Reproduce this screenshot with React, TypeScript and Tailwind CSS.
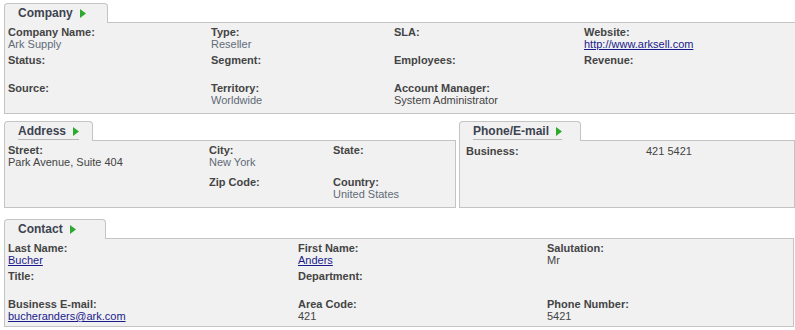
import React from "react";

type Field = {
  label: string;
  value?: string;
  kind?: "soft" | "plain" | "link";
};

function Arrow() {
  return (
    <svg width="6" height="9" viewBox="0 0 6 9" className="ml-[7px] inline-block">
      <path d="M0 0 L6 4.5 L0 9 Z" fill="#2eaa2e" />
    </svg>
  );
}

function Tab({
  title,
  width,
  underline,
}: {
  title: string;
  width: string;
  underline?: boolean;
}) {
  return (
    <div
      className={`relative z-10 -mb-px flex h-[20px] items-center rounded-t-[4px] border border-b-0 border-[#c4c4c4] bg-[#f1f1f1] pl-[13px] ${width}`}
    >
      <span
        className={`flex items-center text-[12px] leading-[15px] font-bold text-[#3d4350] ${
          underline ? "border-b border-[#b8b8b8]" : ""
        }`}
      >
        {title}
        <Arrow />
      </span>
    </div>
  );
}

function Cell({ field }: { field: Field }) {
  const valueClass =
    field.kind === "link"
      ? "text-[#1a1a8c] underline"
      : field.kind === "soft"
        ? "text-[#5f6b78]"
        : "text-[#444]";
  return (
    <div>
      <div className="text-[11px] leading-[12px] font-bold text-[#444]">
        {field.label}
      </div>
      {field.value && (
        <div className={`text-[11px] leading-[12px] ${valueClass}`}>
          {field.value}
        </div>
      )}
    </div>
  );
}

const company: Field[] = [
  { label: "Company Name:", value: "Ark Supply", kind: "soft" },
  { label: "Type:", value: "Reseller", kind: "soft" },
  { label: "SLA:" },
  { label: "Website:", value: "http://www.arksell.com", kind: "link" },
  { label: "Status:" },
  { label: "Segment:" },
  { label: "Employees:" },
  { label: "Revenue:" },
  { label: "Source:" },
  { label: "Territory:", value: "Worldwide", kind: "soft" },
  { label: "Account Manager:", value: "System Administrator", kind: "plain" },
  { label: "" },
];

const address: Field[] = [
  { label: "Street:", value: "Park Avenue, Suite 404", kind: "plain" },
  { label: "City:", value: "New York", kind: "soft" },
  { label: "State:" },
  { label: "" },
  { label: "Zip Code:" },
  { label: "Country:", value: "United States", kind: "soft" },
];

const contact: Field[] = [
  { label: "Last Name:", value: "Bucher", kind: "link" },
  { label: "First Name:", value: "Anders", kind: "link" },
  { label: "Salutation:", value: "Mr", kind: "plain" },
  { label: "Title:" },
  { label: "Department:" },
  { label: "" },
  { label: "Business E-mail:", value: "bucheranders@ark.com", kind: "link" },
  { label: "Area Code:", value: "421", kind: "plain" },
  { label: "Phone Number:", value: "5421", kind: "plain" },
];

export default function App() {
  return (
    <div
      className="h-[330px] w-[795px] overflow-hidden bg-white"
      style={{ fontFamily: "'Liberation Sans', Arial, sans-serif" }}
    >
      <div className="flex flex-col gap-[7px] pt-[3px] pl-[4px]">
        <section className="w-[800px]">
          <Tab title="Company" width="w-[104px]" />
          <div className="grid grid-cols-[203px_183px_190px_1fr] auto-rows-[28px] border border-[#c4c4c4] bg-[#f1f1f1] pt-[3px] pb-[3px] pl-[3px]">
            {company.map((f, i) => (
              <Cell key={i} field={f} />
            ))}
          </div>
        </section>

        <div className="flex gap-[3px]">
          <section className="w-[452px]">
            <Tab title="Address" width="w-[89px]" underline />
            <div className="grid h-[68px] grid-cols-[201px_124px_1fr] auto-rows-[32px] border border-[#c4c4c4] bg-[#f1f1f1] pt-[3px] pl-[3px]">
              {address.map((f, i) => (
                <Cell key={i} field={f} />
              ))}
            </div>
          </section>
          <section className="w-[336px]">
            <Tab title="Phone/E-mail" width="w-[122px]" underline />
            <div className="flex h-[68px] items-start border border-[#c4c4c4] bg-[#f1f1f1] pt-[4px] pl-[6px]">
              <div className="w-[180px] text-[11px] leading-[12px] font-bold text-[#444]">
                Business:
              </div>
              <div className="text-[11px] leading-[12px] text-[#444]">421 5421</div>
            </div>
          </section>
        </div>

        <section className="mt-[4px] w-[790px]">
          <Tab title="Contact" width="w-[102px]" />
          <div className="grid grid-cols-[290px_249px_1fr] auto-rows-[28px] border border-[#c4c4c4] bg-[#f1f1f1] pt-[3px] pl-[3px]">
            {contact.map((f, i) => (
              <Cell key={i} field={f} />
            ))}
          </div>
        </section>
      </div>
    </div>
  );
}
